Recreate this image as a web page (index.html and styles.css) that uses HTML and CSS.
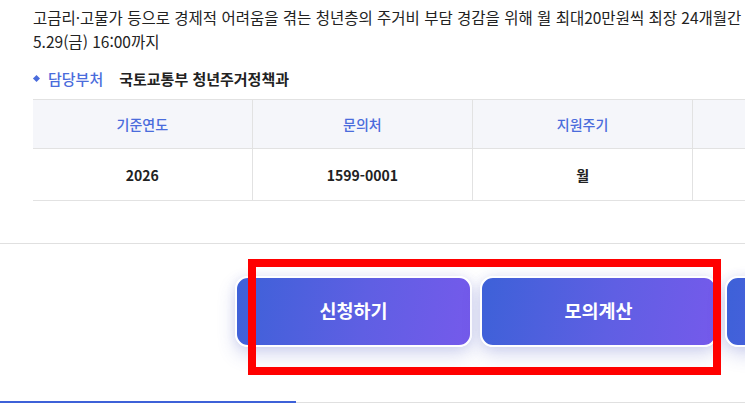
FILE: index.html
```
<!DOCTYPE html>
<html lang="ko">
<head>
<meta charset="utf-8">
<link rel="stylesheet" href="styles.css">
</head>
<body>
<div class="page">
  <div class="desc">
    <p class="line">고금리·고물가 등으로 경제적 어려움을 겪는 청년층의 주거비 부담 경감을 위해 월 최대20만원씩 최장 24개월간 월세를 지원합니다.</p>
    <p class="line">5.29(금) 16:00까지</p>
  </div>
  <div class="dept">
    <span class="bullet"></span>
    <span class="dept-label">담당부처</span>
    <span class="dept-value">국토교통부 청년주거정책과</span>
  </div>
  <table class="info">
    <thead>
      <tr><th>기준연도</th><th>문의처</th><th>지원주기</th><th>지원형태</th></tr>
    </thead>
    <tbody>
      <tr><td>2026</td><td>1599-0001</td><td>월</td><td>현금</td></tr>
    </tbody>
  </table>
  <div class="actions">
    <button class="btn">신청하기</button>
    <button class="btn">모의계산</button>
    <button class="btn">문의하기</button>
  </div>
  <div class="tabs">
    <div class="tab active"></div>
    <div class="tab"></div>
  </div>
  <div class="highlight"></div>
</div>
</body>
</html>
```
FILE: styles.css
```
* { box-sizing: border-box; }
html, body { margin: 0; padding: 0; background: #fff; }
.page {
  position: relative;
  width: 745px;
  height: 403px;
  overflow: hidden;
  font-family: "Noto Sans CJK KR", "Noto Sans", sans-serif;
  color: #222;
}
.desc { padding: 5px 0 0 33px; }
.line {
  margin: 0;
  font-size: 15.5px;
  line-height: 24px;
  white-space: nowrap;
}
.dept {
  display: flex;
  align-items: center;
  margin: 13px 0 0 33px;
  height: 24px;
  font-size: 15px;
}
.bullet {
  width: 5px; height: 5px;
  background: #4a6cdc;
  transform: rotate(45deg);
  margin: 0 9px 0 1px;
}
.dept-label { color: #4a6cdc; font-weight: 500; margin-right: 16px; }
.dept-value { font-weight: 700; color: #222; }
.info {
  margin: 9px 0 0 33px;
  border-collapse: collapse;
  table-layout: fixed;
  width: 880px;
  font-size: 14px;
}
.info th, .info td {
  width: 220px;
  text-align: center;
  border-left: 1px solid #e2e2e2;
}
.info th:first-child, .info td:first-child { border-left: none; width: 219px; }
.info th {
  height: 49px;
  background: #f5f6fa;
  color: #4a6cdc;
  font-weight: 500;
  border-top: 1px solid #e2e2e2;
  border-bottom: 1px solid #e2e2e2;
}
.info td {
  height: 52px;
  font-weight: 600;
  color: #222;
  border-bottom: 1px solid #e2e2e2;
}
.actions {
  display: flex;
  gap: 8px;
  margin-top: 42px;
  border-top: 1px solid #e0e0e0;
  padding: 32px 0 0 235px;
}
.btn {
  flex: none;
  width: 237px;
  height: 71px;
  border: 2px solid #fff;
  border-radius: 13px;
  background: linear-gradient(100deg, #3d61d8 0%, #5f5fe3 55%, #755aeb 100%);
  color: #fff;
  font-family: inherit;
  font-size: 18.5px;
  font-weight: 700;
  padding: 0 0 3px;
  box-shadow: 0 8px 18px rgba(70, 80, 190, 0.22), 0 0 10px rgba(90, 100, 200, 0.12);
}
.tabs {
  position: absolute;
  left: 0; right: 0; bottom: 0;
  display: flex;
  height: 2px;
}
.tab { flex: 1; border-bottom: 1px solid #e0e0e0; }
.tab.active { flex: none; width: 296px; background: #3d61d8; border: none; }
.highlight {
  position: absolute;
  left: 248px;
  top: 259px;
  width: 473px;
  height: 116px;
  border: 8px solid #ff0000;
}
```
